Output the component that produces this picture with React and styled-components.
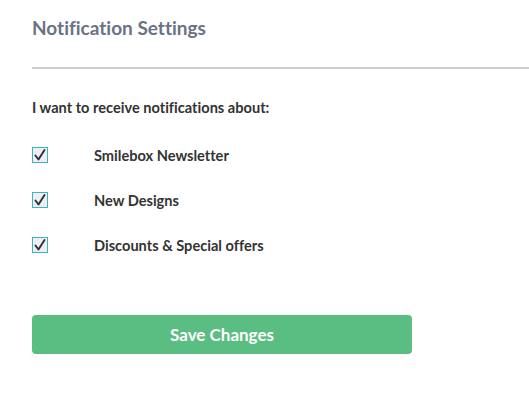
import React, { useState } from 'react';
import styled, { createGlobalStyle } from 'styled-components';

const Global = createGlobalStyle`
  html, body {
    margin: 0;
    padding: 0;
    background: #ffffff;
    font-family: Lato, "Open Sans", "Liberation Sans", sans-serif;
    font-variant-ligatures: none;
  }
`;

const Page = styled.div`
  width: 529px;
  height: 405px;
  box-sizing: border-box;
  padding: 17px 0 0 32px;
`;

const Title = styled.h2`
  margin: 0;
  font-size: 19px;
  font-weight: 700;
  color: #6a7383;
  line-height: 22px;
`;

const Divider = styled.hr`
  margin: 28px 0 0 0;
  border: none;
  height: 2px;
  background: #cccccc;
`;

const Intro = styled.p`
  margin: 31px 0 0 0;
  font-size: 14.6px;
  font-weight: 700;
  color: #333333;
  line-height: 16px;
`;

const List = styled.div`
  display: flex;
  flex-direction: column;
  gap: 29px;
  margin-top: 31px;
`;

const Row = styled.label`
  display: flex;
  align-items: center;
  height: 16px;
  cursor: pointer;
`;

const Box = styled.span`
  width: 14px;
  height: 14px;
  border: 1px solid #3bb5bd;
  background: #efefef;
  display: flex;
  align-items: center;
  justify-content: center;
  flex-shrink: 0;
`;

const Label = styled.span`
  margin-left: 46px;
  font-size: 14.6px;
  font-weight: 700;
  color: #333333;
`;

const SaveButton = styled.button`
  margin-top: 62px;
  width: 380px;
  height: 39px;
  border: none;
  border-radius: 4px;
  background: #5abd82;
  color: #ffffff;
  font-family: inherit;
  font-size: 17px;
  font-weight: 700;
  cursor: pointer;
`;

function Check() {
  return (
    <svg width="12" height="12" viewBox="0 0 12 12">
      <path d="M1.5 6.5 L4.5 10.5 L10.5 1" fill="none" stroke="#2d2d44" strokeWidth="1.9" strokeLinecap="round" strokeLinejoin="round" />
    </svg>
  );
}

const items = ['Smilebox Newsletter', 'New Designs', 'Discounts & Special offers'];

export default function App() {
  const [checked, setChecked] = useState([true, true, true]);

  const toggle = (i) => {
    setChecked(checked.map((c, j) => (j === i ? !c : c)));
  };

  return (
    <Page>
      <Global />
      <Title>Notification Settings</Title>
      <Divider />
      <Intro>I want to receive notifications about:</Intro>
      <List>
        {items.map((item, i) => (
          <Row key={item} onClick={() => toggle(i)}>
            <Box>{checked[i] && <Check />}</Box>
            <Label>{item}</Label>
          </Row>
        ))}
      </List>
      <SaveButton>Save Changes</SaveButton>
    </Page>
  );
}
